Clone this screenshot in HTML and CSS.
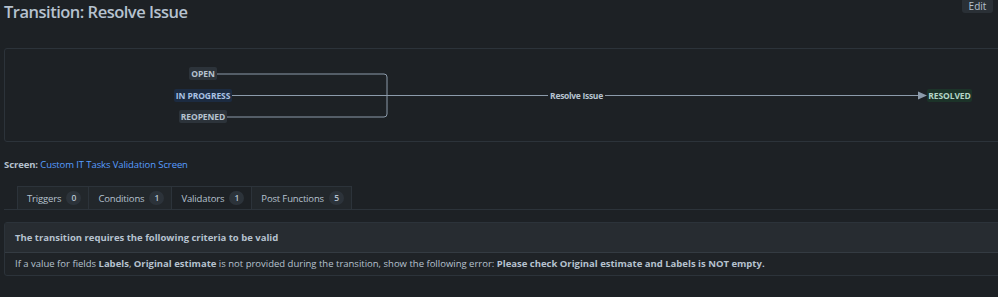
FILE: index.html
```html
<!DOCTYPE html>
<html lang="en">
<head>
<meta charset="UTF-8" />
<meta name="viewport" content="width=device-width, initial-scale=1.0">
<title>Transition: Resolve Issue</title>
<link rel="stylesheet" href="styles.css">
</head>
<body>

<main class="page">
  <!-- page heading with edit button -->
  <header class="head">
    <h1 class="title">Transition: Resolve Issue</h1>
    <button class="edit">Edit</button>
  </header>

  <!-- workflow diagram -->
  <section class="diagram">
    <svg class="lines" width="1000" height="92" viewBox="0 0 1000 92">
      <path d="M212 25 H379 Q382 25 382 28 V65 Q382 68 379 68 H222" fill="none" stroke="#8c9bab" stroke-width="1"/>
      <path d="M227 46.5 H543 M600 46.5 H914" fill="none" stroke="#8c9bab" stroke-width="1"/>
      <path d="M913 42.5 L922 46.5 L913 50.5 Z" fill="#8c9bab"/>
    </svg>
    <span class="node open">OPEN</span>
    <span class="node progress">IN PROGRESS</span>
    <span class="node reopened">REOPENED</span>
    <span class="label">Resolve Issue</span>
    <span class="node resolved">RESOLVED</span>
  </section>

  <p class="screen"><b>Screen:</b> <a href="#">Custom IT Tasks Validation Screen</a></p>

  <!-- tabs -->
  <nav class="tabs">
    <a class="tab" href="#">Triggers <span class="count">0</span></a>
    <a class="tab" href="#">Conditions <span class="count">1</span></a>
    <a class="tab active" href="#">Validators <span class="count">1</span></a>
    <a class="tab" href="#">Post Functions <span class="count">5</span></a>
  </nav>

  <!-- validators list -->
  <section class="panel">
    <div class="panel-head">The transition requires the following criteria to be valid</div>
    <div class="panel-row">If a value for fields <b>Labels</b>, <b>Original estimate</b> is not provided during the transition, show the following error: <b>Please check Original estimate and Labels is NOT empty.</b></div>
  </section>
</main>

</body>
</html>
```

FILE: styles.css
```css
/* page base */
body
{
  margin: 0;
  background: #1d2125;
  color: #b6c2cf;
  font-family: "Open Sans", "Noto Sans", sans-serif;
  overflow: hidden;
}
.page
{
  padding-left: 4px;
  margin-right: -12px;
}
/* heading row */
.head
{
  display: flex;
  justify-content: space-between;
  align-items: flex-start;
  padding-right: 17px;
}
.title
{
  margin: 0;
  padding-top: 1px;
  font-size: 16.5px;
  font-weight: 600;
  line-height: 22px;
  letter-spacing: -0.5px;
}
.edit
{
  margin-top: -2px;
  height: 15px;
  width: 31px;
  padding: 0;
  border: none;
  border-radius: 3px;
  background: #2a3036;
  color: #b6c2cf;
  font-family: inherit;
  font-size: 10px;
  line-height: 14px;
}
/* workflow diagram */
.diagram
{
  position: relative;
  margin-top: 25px;
  height: 92px;
  border: 1px solid #2c333a;
  border-radius: 3px;
}
.lines
{
  position: absolute;
  left: 0;
  top: 0;
}
.node
{
  position: absolute;
  height: 13px;
  line-height: 13px;
  border-radius: 2px;
  background: #2c333a;
  font-size: 8.5px;
  font-weight: 700;
  text-align: center;
  letter-spacing: -0.1px;
  white-space: nowrap;
}
.open
{
  left: 184px;
  top: 18px;
  width: 28px;
}
.progress
{
  left: 169px;
  top: 40px;
  width: 58px;
  background: #1c2b41;
  color: #a9c1e4;
}
.reopened
{
  left: 174px;
  top: 61px;
  width: 48px;
}
.resolved
{
  left: 922px;
  top: 40px;
  width: 45px;
  background: #1c3329;
  color: #b3d6c6;
}
.label
{
  position: absolute;
  left: 543px;
  top: 40px;
  width: 57px;
  line-height: 13px;
  font-size: 8.5px;
  font-weight: 700;
  text-align: center;
  letter-spacing: -0.3px;
  white-space: nowrap;
}
/* screen line */
.screen
{
  margin: 16px 0 0;
  font-size: 9.5px;
  line-height: 14px;
  letter-spacing: -0.1px;
}
.screen a
{
  color: #579dff;
  text-decoration: none;
}
/* tabs */
.tabs
{
  display: flex;
  margin-top: 14px;
  padding-left: 13px;
  border-bottom: 1px solid #2c333a;
}
.tab
{
  display: flex;
  align-items: center;
  gap: 5px;
  height: 22px;
  padding: 0 7px 0 9px;
  border: 1px solid #2c333a;
  border-bottom: none;
  background: #22272b;
  color: #b6c2cf;
  font-size: 9.5px;
  letter-spacing: -0.15px;
  text-decoration: none;
}
.tab + .tab
{
  margin-left: -1px;
}
.active
{
  background: #1d2125;
}
.count
{
  display: inline-block;
  min-width: 7px;
  padding: 0 4px;
  height: 14px;
  line-height: 14px;
  border-radius: 7px;
  background: #2c333a;
  font-size: 8.5px;
  font-weight: 600;
  text-align: center;
}
/* validator panel */
.panel
{
  margin-top: 12px;
  border: 1px solid #2c333a;
  border-radius: 3px;
  background: #1f2327;
}
.panel-head
{
  height: 29px;
  line-height: 29px;
  padding-left: 10px;
  background: #272c31;
  border-bottom: 1px solid #343b42;
  font-size: 9.5px;
  font-weight: 700;
}
.panel-row
{
  height: 22px;
  line-height: 22px;
  padding-left: 10px;
  font-size: 9.5px;
}
```
